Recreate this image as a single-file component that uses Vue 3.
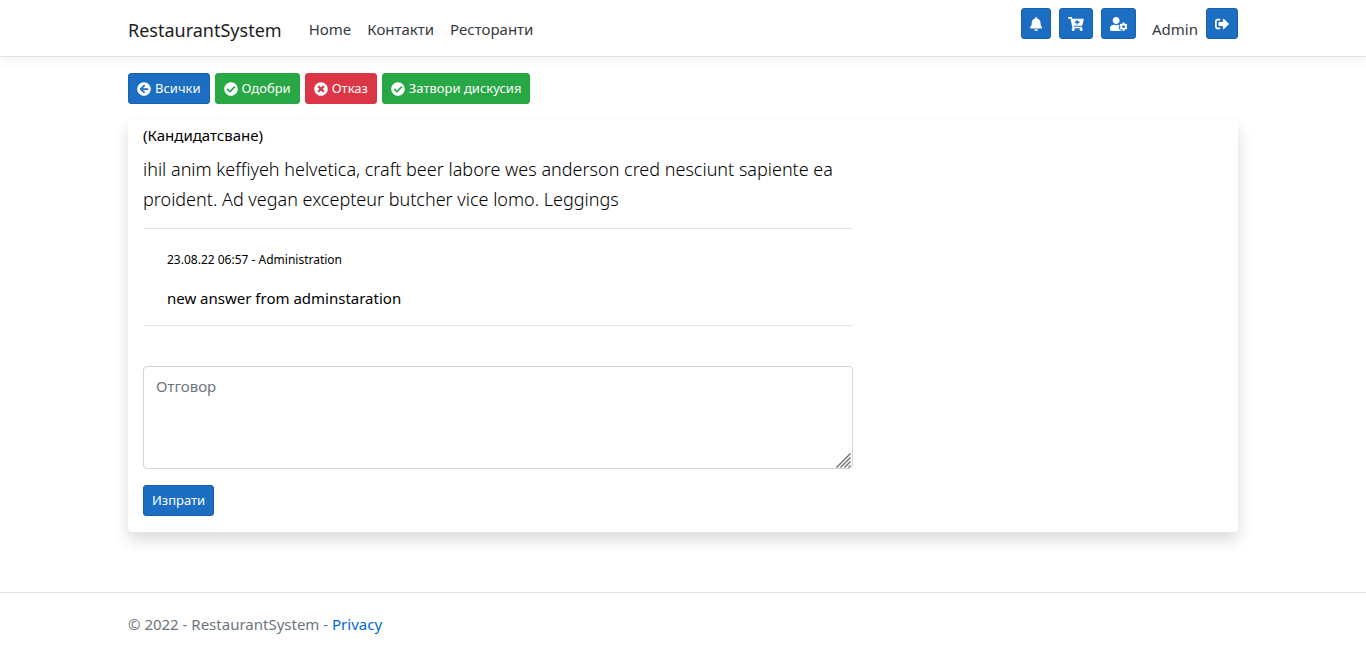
<script setup>
import { ref } from 'vue'

const reply = ref('')

const links = ['Home', 'Контакти', 'Ресторанти']

const icons = {
  bell: {
    width: 448,
    path: 'M224 512c35.32 0 63.97-28.65 63.97-64H160.03c0 35.35 28.65 64 63.97 64zm215.39-149.71c-19.32-20.76-55.47-51.99-55.47-154.29 0-77.7-54.48-139.9-127.94-155.16V32c0-17.67-14.32-32-31.98-32s-31.98 14.33-31.98 32v20.84C118.56 68.1 64.08 130.3 64.08 208c0 102.3-36.15 133.53-55.47 154.29-6 6.45-8.66 14.16-8.61 21.71.11 16.4 12.98 32 32.1 32h383.8c19.12 0 32-15.6 32.1-32 .05-7.55-2.61-15.27-8.61-21.71z'
  },
  cart: {
    width: 576,
    path: 'M504.717 320H211.572l6.545 32h268.418c15.401 0 26.816 14.301 23.403 29.319l-5.517 24.276C523.112 414.668 536 433.828 536 456c0 31.202-25.519 56.444-56.824 55.994-29.823-.429-54.35-24.631-55.155-54.447-.44-16.287 6.085-31.049 16.803-41.548H231.176C241.553 426.165 248 440.326 248 456c0 31.813-26.528 57.431-58.67 55.938-28.54-1.325-51.751-24.385-53.251-52.917-1.158-22.034 10.436-41.455 28.051-51.586L93.883 64H24C10.745 64 0 53.255 0 40V24C0 10.745 10.745 0 24 0h102.529c11.401 0 21.228 8.021 23.513 19.19L159.208 64H551.99c15.401 0 26.816 14.301 23.403 29.319l-47.273 208C525.637 312.246 515.923 320 504.717 320zM408 168h-48v-40c0-8.837-7.163-16-16-16h-16c-8.837 0-16 7.163-16 16v40h-48c-8.837 0-16 7.163-16 16v16c0 8.837 7.163 16 16 16h48v40c0 8.837 7.163 16 16 16h16c8.837 0 16-7.163 16-16v-40h48c8.837 0 16-7.163 16-16v-16c0-8.837-7.163-16-16-16z'
  },
  userCog: {
    width: 640,
    path: 'M610.5 373.3c2.6-14.1 2.6-28.5 0-42.6l25.8-14.9c3-1.7 4.3-5.2 3.3-8.5-6.7-21.6-18.2-41.2-33.2-57.4-2.3-2.5-6-3.1-9-1.4l-25.8 14.9c-10.9-9.3-23.4-16.5-36.9-21.3v-29.8c0-3.4-2.4-6.4-5.7-7.1-22.3-5-45-4.8-66.2 0-3.3.7-5.7 3.7-5.7 7.1v29.8c-13.5 4.8-26 12-36.9 21.3l-25.8-14.9c-2.9-1.7-6.7-1.1-9 1.4-15 16.2-26.5 35.8-33.2 57.4-1 3.3.4 6.8 3.3 8.5l25.8 14.9c-2.6 14.1-2.6 28.5 0 42.6l-25.8 14.9c-3 1.7-4.3 5.2-3.3 8.5 6.7 21.6 18.2 41.1 33.2 57.4 2.3 2.5 6 3.1 9 1.4l25.8-14.9c10.9 9.3 23.4 16.5 36.9 21.3v29.8c0 3.4 2.4 6.4 5.7 7.1 22.3 5 45 4.8 66.2 0 3.3-.7 5.7-3.7 5.7-7.1v-29.8c13.5-4.8 26-12 36.9-21.3l25.8 14.9c2.9 1.7 6.7 1.1 9-1.4 15-16.2 26.5-35.8 33.2-57.4 1-3.3-.4-6.8-3.3-8.5l-25.8-14.9zM496 400.5c-26.8 0-48.5-21.8-48.5-48.5s21.8-48.5 48.5-48.5 48.5 21.8 48.5 48.5-21.7 48.5-48.5 48.5zM224 256c70.7 0 128-57.3 128-128S294.7 0 224 0 96 57.3 96 128s57.3 128 128 128zm201.2 226.5c-2.3-1.2-4.6-2.6-6.8-3.9l-7.9 4.6c-6 3.4-12.8 5.3-19.6 5.3-10.9 0-21.4-4.6-28.9-12.6-18.3-19.8-32.3-43.9-40.2-69.6-5.5-17.7 1.9-36.4 17.9-45.7l7.9-4.6c-.1-2.6-.1-5.2 0-7.8l-7.9-4.6c-16-9.2-23.4-28-17.9-45.7.9-2.9 2.2-5.8 3.2-8.7-3.8-.3-7.5-1.2-11.4-1.2h-16.7c-22.2 10.2-46.9 16-72.9 16s-50.6-5.8-72.9-16h-16.7C60.2 288 0 348.2 0 422.4V464c0 26.5 21.5 48 48 48h352c10.1 0 19.5-3.2 27.2-8.5-1.2-3.8-2-7.7-2-11.8v-9.2z'
  },
  signOut: {
    width: 512,
    path: 'M497 273L329 441c-15 15-41 4.5-41-17v-96H152c-13.3 0-24-10.7-24-24v-96c0-13.3 10.7-24 24-24h136V88c0-21.4 25.9-32 41-17l168 168c9.3 9.4 9.3 24.6 0 34zM192 436v-40c0-6.6-5.4-12-12-12H96c-17.7 0-32-14.3-32-32V160c0-17.7 14.3-32 32-32h84c6.6 0 12-5.4 12-12V76c0-6.6-5.4-12-12-12H96c-53 0-96 43-96 96v192c0 53 43 96 96 96h84c6.6 0 12-5.4 12-12z'
  },
  back: {
    width: 512,
    path: 'M256 504C119 504 8 393 8 256S119 8 256 8s248 111 248 248-111 248-248 248zm28.9-143.6L209.4 288H392c13.3 0 24-10.7 24-24v-16c0-13.3-10.7-24-24-24H209.4l75.5-72.4c9.7-9.3 9.9-24.8.4-34.3l-11-10.9c-9.4-9.4-24.6-9.4-33.9 0L107.7 239c-9.4 9.4-9.4 24.6 0 33.9l132.7 132.7c9.4 9.4 24.6 9.4 33.9 0l11-10.9c9.5-9.5 9.3-25-.4-34.3z'
  },
  check: {
    width: 512,
    path: 'M504 256c0 136.967-111.033 248-248 248S8 392.967 8 256 119.033 8 256 8s248 111.033 248 248zM227.314 387.314l184-184c6.248-6.248 6.248-16.379 0-22.627l-22.627-22.627c-6.248-6.249-16.379-6.249-22.628 0L216 308.118l-70.059-70.059c-6.248-6.248-16.379-6.248-22.628 0l-22.627 22.627c-6.248 6.248-6.248 16.379 0 22.627l104 104c6.249 6.249 16.379 6.249 22.628.001z'
  },
  times: {
    width: 512,
    path: 'M256 8C119 8 8 119 8 256s111 248 248 248 248-111 248-248S393 8 256 8zm121.6 313.1c4.7 4.7 4.7 12.3 0 17L338 377.6c-4.7 4.7-12.3 4.7-17 0L256 312l-65.1 65.6c-4.7 4.7-12.3 4.7-17 0L134.4 338c-4.7-4.7-4.7-12.3 0-17l65.6-65-65.6-65.1c-4.7-4.7-4.7-12.3 0-17l39.6-39.6c4.7-4.7 12.3-4.7 17 0l65 65.7 65.1-65.6c4.7-4.7 12.3-4.7 17 0l39.6 39.6c4.7 4.7 4.7 12.3 0 17L312 256l65.6 65.1z'
  }
}

const tools = [
  { label: 'Известия', icon: icons.bell },
  { label: 'Количка', icon: icons.cart },
  { label: 'Профил', icon: icons.userCog }
]

const actions = [
  { label: 'Всички', icon: icons.back, tone: 'primary' },
  { label: 'Одобри', icon: icons.check, tone: 'success' },
  { label: 'Отказ', icon: icons.times, tone: 'danger' },
  { label: 'Затвори дискусия', icon: icons.check, tone: 'success' }
]
</script>

<template>
  <div class="page">
    <header class="topbar">
      <div class="container bar">
        <a class="brand" href="#">RestaurantSystem</a>
        <nav class="links">
          <a v-for="link in links" :key="link" href="#">{{ link }}</a>
        </nav>
        <div class="account">
          <button v-for="tool in tools" :key="tool.label" type="button" class="btn primary" :aria-label="tool.label">
            <svg class="icon" :viewBox="`0 0 ${tool.icon.width} 512`" aria-hidden="true"><path :d="tool.icon.path" /></svg>
          </button>
          <a class="user" href="#">Admin</a>
          <button type="button" class="btn primary" aria-label="Изход">
            <svg class="icon" viewBox="0 0 512 512" aria-hidden="true"><path :d="icons.signOut.path" /></svg>
          </button>
        </div>
      </div>
    </header>

    <main class="container content">
      <div class="actions">
        <button v-for="action in actions" :key="action.label" type="button" class="btn" :class="action.tone">
          <svg class="icon" viewBox="0 0 512 512" aria-hidden="true"><path :d="action.icon.path" /></svg>
          <span>{{ action.label }}</span>
        </button>
      </div>

      <section class="card">
        <div class="thread">
          <div class="topic">(Кандидатсване)</div>
          <p class="lead">ihil anim keffiyeh helvetica, craft beer labore wes anderson cred nesciunt sapiente ea proident. Ad vegan excepteur butcher vice lomo. Leggings</p>
          <article class="answer">
            <small>23.08.22 06:57 - Administration</small>
            <p>new answer from adminstaration</p>
          </article>
          <form class="reply" @submit.prevent>
            <div class="field">
              <textarea v-model="reply" placeholder="Отговор" aria-label="Отговор"></textarea>
              <svg class="grip" viewBox="0 0 15 15" aria-hidden="true"><path d="M0.5 14.5L14.5 0.5M4.5 14.5L14.5 4.5M8.5 14.5L14.5 8.5M12.5 14.5L14.5 12.5" /></svg>
            </div>
            <button type="submit" class="btn primary">Изпрати</button>
          </form>
        </div>
      </section>
    </main>

    <footer class="footer">
      <div class="container">© 2022 - RestaurantSystem - <a href="#">Privacy</a></div>
    </footer>
  </div>
</template>

<style>
body {
  margin: 0;
  background: #fff;
}
</style>

<style scoped>
.page,
.page * {
  box-sizing: border-box;
}

.page {
  display: flex;
  flex-direction: column;
  min-height: 100vh;
  font-family: "Noto Sans", "Open Sans", sans-serif;
  font-size: 15px;
  line-height: 24px;
  color: #000;
}

.container {
  width: 100%;
  max-width: 1140px;
  margin: 0 auto;
  padding: 0 15px;
}

a {
  text-decoration: none;
}

.topbar {
  padding: 8px 0;
  border-bottom: 1px solid #dee2e6;
  box-shadow: 0 4px 12px rgba(0, 0, 0, 0.05);
}

.bar {
  display: flex;
  align-items: center;
}

.brand {
  margin-right: 27px;
  padding-top: 3px;
  font-size: 18px;
  line-height: 30px;
  color: #1b1e21;
}

.links {
  display: flex;
  gap: 16px;
  padding: 9px 0 7px;
}

.links a,
.user {
  color: #343a40;
}

.account {
  display: flex;
  align-items: flex-start;
  align-self: stretch;
  gap: 8px;
  margin-left: auto;
}

.user {
  padding: 9px 0 7px 8px;
}

.btn {
  display: inline-flex;
  align-items: center;
  gap: 4px;
  height: 31px;
  padding: 0 8px;
  border: 1px solid transparent;
  border-radius: 3px;
  font-family: inherit;
  font-size: 13px;
  line-height: 21px;
  color: #fff;
  cursor: pointer;
}

.primary {
  background: #1b6ec2;
  border-color: #1861ac;
}

.success {
  background: #28a745;
  border-color: #28a745;
}

.danger {
  background: #dc3545;
  border-color: #dc3545;
}

.icon {
  display: block;
  height: 14px;
  fill: currentColor;
}

.content {
  flex: 1;
  padding-top: 16px;
  padding-bottom: 60px;
}

.actions {
  display: flex;
  flex-wrap: wrap;
  gap: 5px;
}

.card {
  margin-top: 16px;
  padding: 3px 0 16px;
  border-radius: 4px;
  background: #fff;
  box-shadow: 0 8px 16px rgba(0, 0, 0, 0.15);
}

.thread {
  width: 66.6667%;
  padding: 0 15px;
}

.lead {
  margin: 7px 0 14px;
  font-family: "Noto Sans", "Open Sans", sans-serif;
  font-size: 18px;
  font-weight: 300;
  line-height: 30px;
}

.answer {
  padding: 19px 24px 15px;
  border-top: 1px solid #e5e5e5;
  border-bottom: 1px solid #e5e5e5;
}

.answer small {
  display: block;
  font-size: 12px;
}

.answer p {
  margin: 14px 0 0;
}

.reply {
  margin-top: 40px;
}

.field {
  position: relative;
  margin-bottom: 16px;
}

textarea {
  display: block;
  width: 100%;
  height: 103px;
  padding: 7px 12px;
  border: 1px solid #ced4da;
  border-radius: 4px;
  background: #fff;
  font: inherit;
  color: #495057;
  resize: vertical;
}

textarea::placeholder {
  color: #6c757d;
  opacity: 1;
}

textarea::-webkit-resizer {
  background: transparent;
}

.grip {
  position: absolute;
  right: 2px;
  bottom: 1px;
  width: 15px;
  height: 15px;
  fill: none;
  stroke: #777;
  stroke-width: 1.5;
  pointer-events: none;
}

.footer {
  padding-top: 2px;
  border-top: 1px solid #dee2e6;
  line-height: 58px;
  color: #6c757d;
}

.footer a {
  color: #0366d6;
}
</style>
